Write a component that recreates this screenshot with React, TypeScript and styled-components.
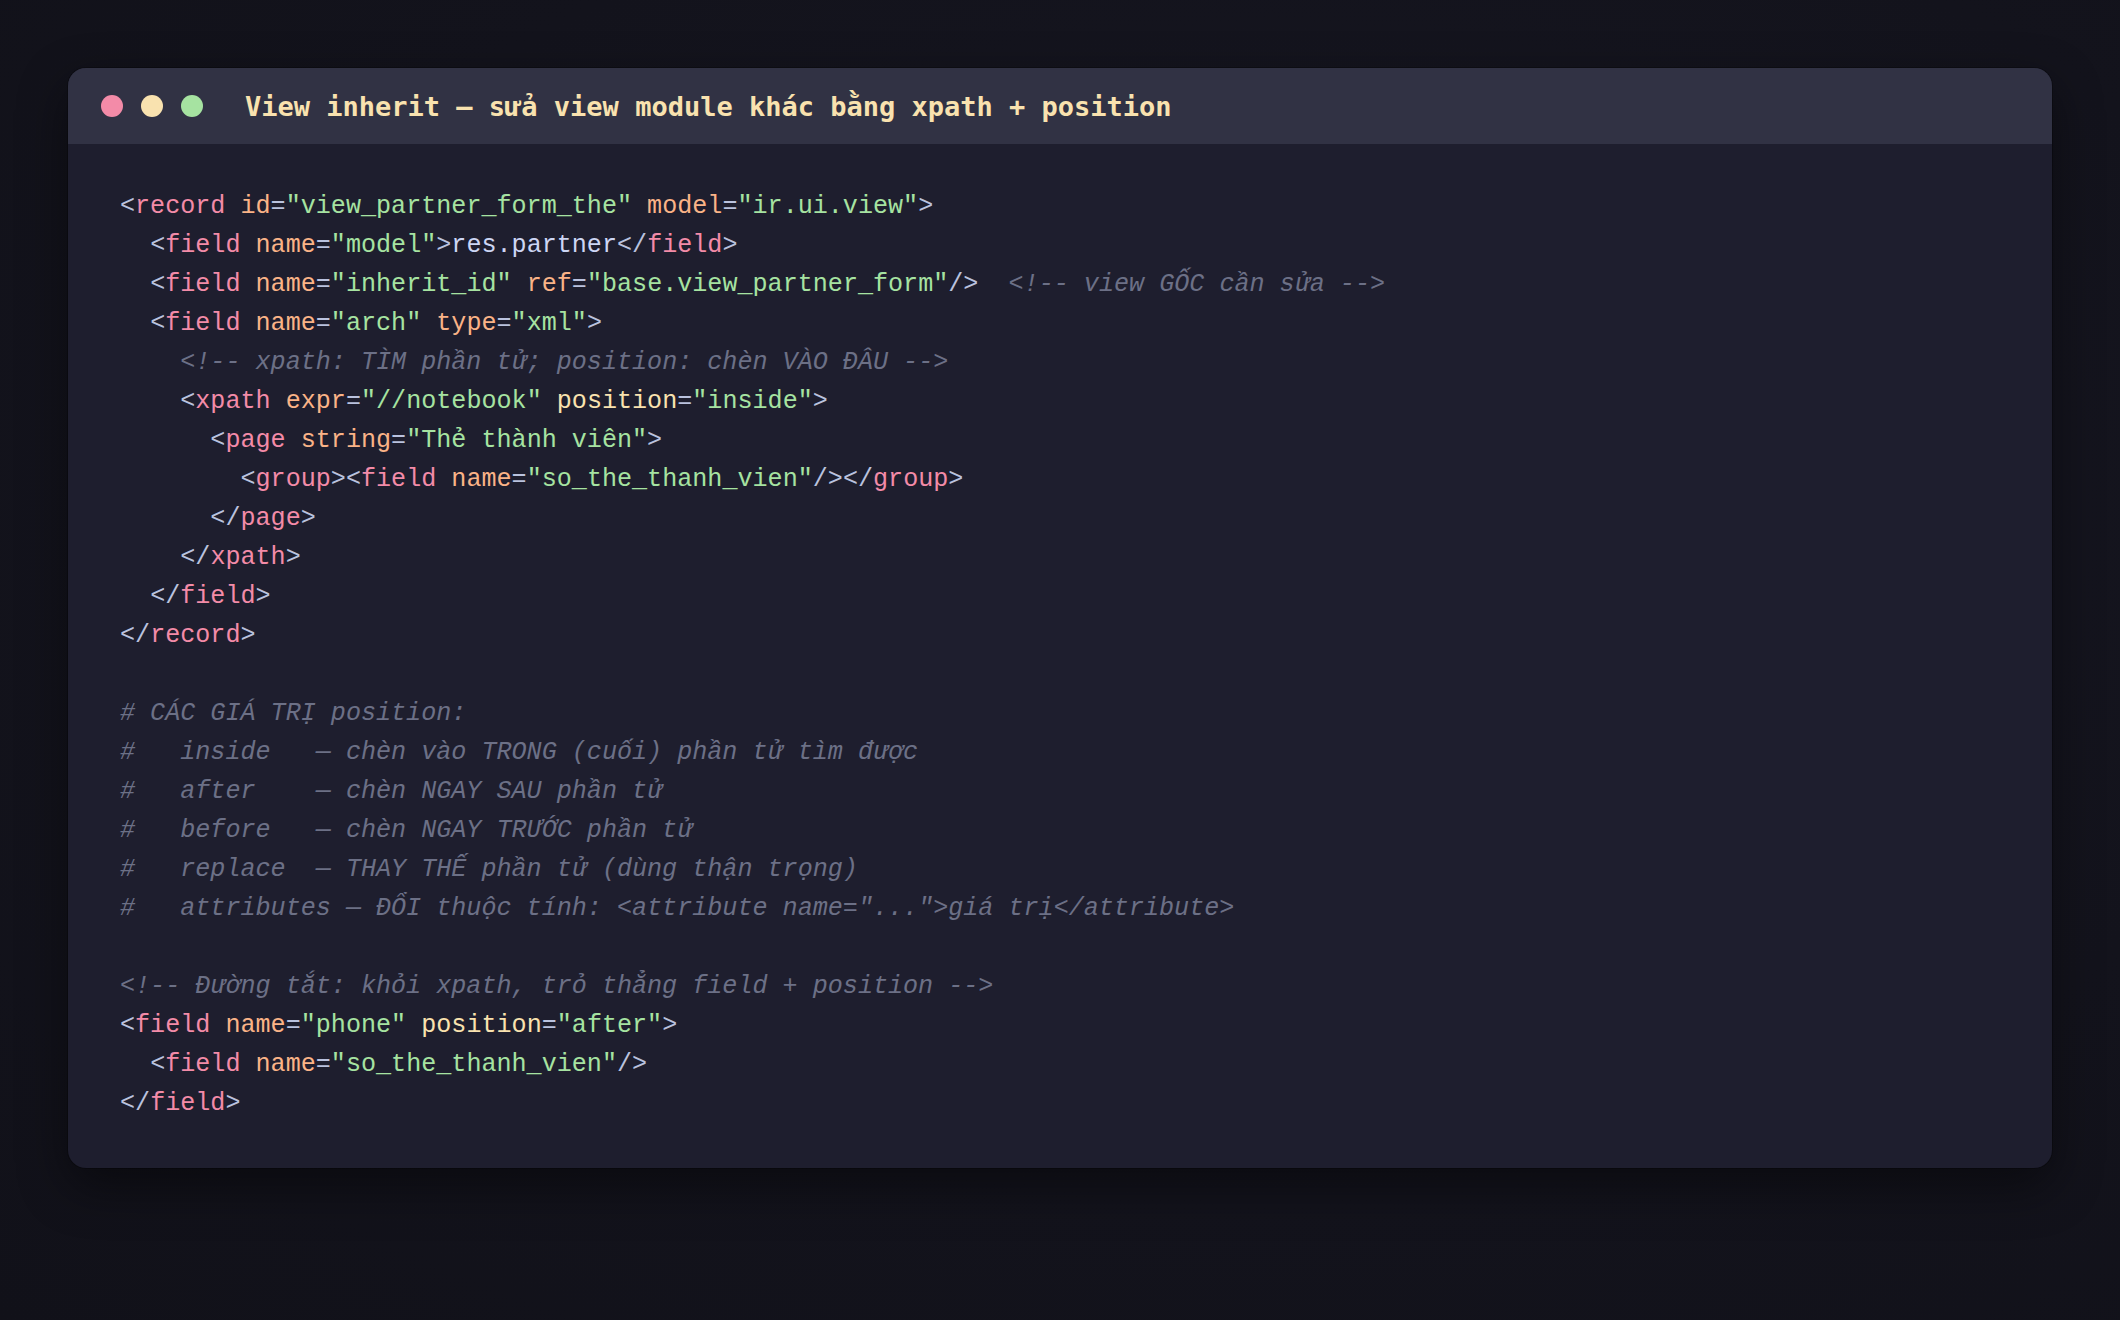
import React from "react";
import styled, { createGlobalStyle } from "styled-components";

const GlobalStyle = createGlobalStyle`
  html, body {
    margin: 0;
    padding: 0;
    background: #13131c;
  }
  body {
    min-height: 100vh;
    font-family: "Liberation Mono", monospace;
  }
`;

const Page = styled.div`
  min-height: 1320px;
  padding: 68px;
  box-sizing: border-box;
  background: radial-gradient(ellipse at 60% 40%, #171722 0%, #13131c 60%, #111119 100%);
`;

const Window = styled.section`
  width: 1984px;
  border-radius: 18px;
  overflow: hidden;
  background: #1e1e2e;
  box-shadow: 0 18px 50px rgba(0, 0, 0, 0.45), 0 0 0 1px rgba(0, 0, 0, 0.25);
`;

const TitleBar = styled.header`
  height: 76px;
  display: flex;
  align-items: center;
  padding: 0 33px;
  background: #313244;
`;

const Dots = styled.div`
  display: flex;
  gap: 18px;
`;

const Dot = styled.span<{ $color: string }>`
  width: 22px;
  height: 22px;
  border-radius: 50%;
  background: ${(p) => p.$color};
`;

const Title = styled.h1`
  margin: 0 0 0 42px;
  font-family: "DejaVu Sans Mono", monospace;
  font-weight: 700;
  font-size: 27px;
  color: #f9e2af;
  white-space: pre;
`;

const Code = styled.pre`
  margin: 0;
  padding: 43px 52px 45px;
  font-family: "Liberation Mono", monospace;
  font-size: 25.1px;
  line-height: 39px;
  color: #cdd6f4;
`;

const Line = styled.div`
  height: 39px;
  white-space: pre;
`;

type Kind = "p" | "t" | "a" | "k" | "s" | "x" | "c";

const colors: Record<Kind, string> = {
  p: "#bac2de",
  t: "#f38ba8",
  a: "#fab387",
  k: "#f9e2af",
  s: "#a6e3a1",
  x: "#cdd6f4",
  c: "#6c7086",
};

const Tok = styled.span<{ $kind: Kind }>`
  color: ${(p) => colors[p.$kind]};
  font-style: ${(p) => (p.$kind === "c" ? "italic" : "normal")};
`;

type Seg = [Kind, string];

const lines: Seg[][] = [
  [["p", "<"], ["t", "record"], ["x", " "], ["a", "id"], ["p", "="], ["s", '"view_partner_form_the"'], ["x", " "], ["a", "model"], ["p", "="], ["s", '"ir.ui.view"'], ["p", ">"]],
  [["x", "  "], ["p", "<"], ["t", "field"], ["x", " "], ["a", "name"], ["p", "="], ["s", '"model"'], ["p", ">"], ["x", "res.partner"], ["p", "</"], ["t", "field"], ["p", ">"]],
  [["x", "  "], ["p", "<"], ["t", "field"], ["x", " "], ["a", "name"], ["p", "="], ["s", '"inherit_id"'], ["x", " "], ["a", "ref"], ["p", "="], ["s", '"base.view_partner_form"'], ["p", "/>"], ["x", "  "], ["c", "<!-- view GỐC cần sửa -->"]],
  [["x", "  "], ["p", "<"], ["t", "field"], ["x", " "], ["a", "name"], ["p", "="], ["s", '"arch"'], ["x", " "], ["a", "type"], ["p", "="], ["s", '"xml"'], ["p", ">"]],
  [["x", "    "], ["c", "<!-- xpath: TÌM phần tử; position: chèn VÀO ĐÂU -->"]],
  [["x", "    "], ["p", "<"], ["t", "xpath"], ["x", " "], ["a", "expr"], ["p", "="], ["s", '"//notebook"'], ["x", " "], ["k", "position"], ["p", "="], ["s", '"inside"'], ["p", ">"]],
  [["x", "      "], ["p", "<"], ["t", "page"], ["x", " "], ["a", "string"], ["p", "="], ["s", '"Thẻ thành viên"'], ["p", ">"]],
  [["x", "        "], ["p", "<"], ["t", "group"], ["p", "><"], ["t", "field"], ["x", " "], ["a", "name"], ["p", "="], ["s", '"so_the_thanh_vien"'], ["p", "/></"], ["t", "group"], ["p", ">"]],
  [["x", "      "], ["p", "</"], ["t", "page"], ["p", ">"]],
  [["x", "    "], ["p", "</"], ["t", "xpath"], ["p", ">"]],
  [["x", "  "], ["p", "</"], ["t", "field"], ["p", ">"]],
  [["p", "</"], ["t", "record"], ["p", ">"]],
  [],
  [["c", "# CÁC GIÁ TRỊ position:"]],
  [["c", "#   inside   — chèn vào TRONG (cuối) phần tử tìm được"]],
  [["c", "#   after    — chèn NGAY SAU phần tử"]],
  [["c", "#   before   — chèn NGAY TRƯỚC phần tử"]],
  [["c", "#   replace  — THAY THẾ phần tử (dùng thận trọng)"]],
  [["c", '#   attributes — ĐỔI thuộc tính: <attribute name="...">giá trị</attribute>']],
  [],
  [["c", "<!-- Đường tắt: khỏi xpath, trỏ thẳng field + position -->"]],
  [["p", "<"], ["t", "field"], ["x", " "], ["a", "name"], ["p", "="], ["s", '"phone"'], ["x", " "], ["k", "position"], ["p", "="], ["s", '"after"'], ["p", ">"]],
  [["x", "  "], ["p", "<"], ["t", "field"], ["x", " "], ["a", "name"], ["p", "="], ["s", '"so_the_thanh_vien"'], ["p", "/>"]],
  [["p", "</"], ["t", "field"], ["p", ">"]],
];

export default function App() {
  return (
    <>
      <GlobalStyle />
      <Page>
        <Window>
          <TitleBar>
            <Dots>
              <Dot $color="#f38ba8" />
              <Dot $color="#f9e2af" />
              <Dot $color="#a6e3a1" />
            </Dots>
            <Title>View inherit — sửa view module khác bằng xpath + position</Title>
          </TitleBar>
          <Code>
            {lines.map((segs, i) => (
              <Line key={i}>
                {segs.length === 0
                  ? " "
                  : segs.map(([k, t], j) => (
                      <Tok key={j} $kind={k}>
                        {t}
                      </Tok>
                    ))}
              </Line>
            ))}
          </Code>
        </Window>
      </Page>
    </>
  );
}
